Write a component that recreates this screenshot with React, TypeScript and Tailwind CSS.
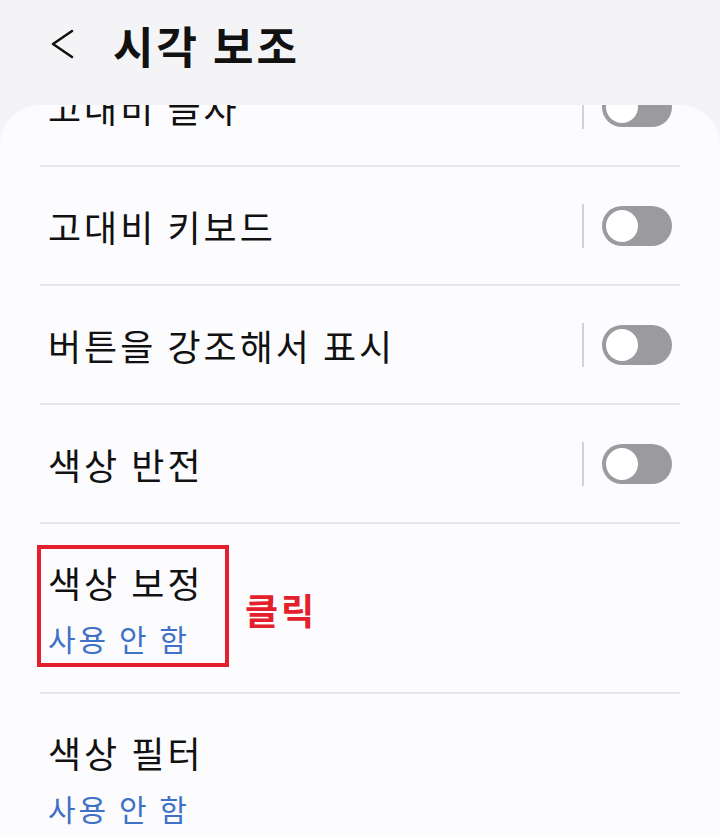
import React from 'react';

const FONT = { fontFamily: '"Noto Sans CJK KR", "Noto Sans", sans-serif' };

const Toggle: React.FC = () => (
  <div className="flex items-center">
    <div className="w-[2px] h-[44px] bg-[#d2d2d5] mr-[18px]" />
    <div className="w-[70px] h-[40px] rounded-full bg-[#9b9b9f] flex items-center px-[4px]">
      <div className="w-[32px] h-[32px] rounded-full bg-white" />
    </div>
  </div>
);

const Divider: React.FC = () => <div className="mx-[40px] h-[2px] bg-[#e6e6e8]" />;

const SwitchRow: React.FC<{ label: string }> = ({ label }) => (
  <div className="h-[117px] flex items-center justify-between pl-[48px] pr-[48px]">
    <span className="text-[36px] leading-[48px] tracking-[3px] text-[#111111]">{label}</span>
    <Toggle />
  </div>
);

const ValueRow: React.FC<{ label: string; value: string; children?: React.ReactNode }> = ({ label, value, children }) => (
  <div className="relative h-[168px] pl-[48px] pt-[34px]">
    <p className="text-[36px] leading-[48px] tracking-[3px] text-[#111111]">{label}</p>
    <p className="mt-[12px] text-[30px] leading-[40px] tracking-[3px] text-[#3f72c6]">{value}</p>
    {children}
  </div>
);

const App: React.FC = () => {
  return (
    <div className="w-[720px] h-[836px] overflow-hidden bg-[#f4f4f6] flex flex-col" style={FONT}>
      <div className="h-[105px] shrink-0 flex items-center pb-[16px] pl-[48px]">
        <svg width="30" height="36" viewBox="0 0 30 36" className="mr-[35px]">
          <polyline points="24,4 5,17 24,30" fill="none" stroke="#111111" strokeWidth="2.6" strokeLinecap="round" strokeLinejoin="round" />
        </svg>
        <h1 className="text-[44px] leading-[56px] tracking-[3px] font-bold text-[#111111]">시각 보조</h1>
      </div>

      {/* list is scrolled: first row sits partly under the header */}
      <div className="flex-1 bg-[#fcfcfe] rounded-t-[40px] overflow-hidden">
        <div className="-mt-[57px]">
          <SwitchRow label="고대비 글자" />
          <Divider />
          <SwitchRow label="고대비 키보드" />
          <Divider />
          <SwitchRow label="버튼을 강조해서 표시" />
          <Divider />
          <SwitchRow label="색상 반전" />
          <Divider />
          <ValueRow label="색상 보정" value="사용 안 함">
            <div className="absolute left-[37px] top-[21px] w-[192px] h-[122px] border-[4px] border-[#e3202b]" />
            <span className="absolute left-[245px] top-[67px] text-[36px] leading-[36px] tracking-[3px] font-bold text-[#e3202b]">클릭</span>
          </ValueRow>
          <Divider />
          <ValueRow label="색상 필터" value="사용 안 함" />
        </div>
      </div>
    </div>
  );
};

export default App;
